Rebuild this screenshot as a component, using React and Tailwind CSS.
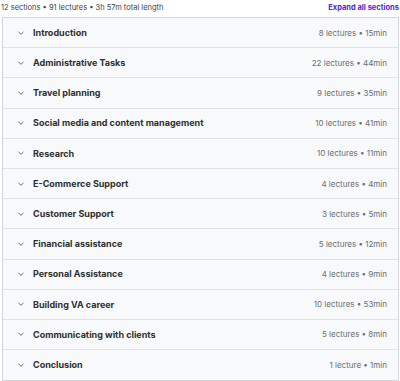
import React from 'react';

const sections = [
  ['Introduction', '8 lectures • 15min'],
  ['Administrative Tasks', '22 lectures • 44min'],
  ['Travel planning', '9 lectures • 35min'],
  ['Social media and content management', '10 lectures • 41min'],
  ['Research', '10 lectures • 11min'],
  ['E-Commerce Support', '4 lectures • 4min'],
  ['Customer Support', '3 lectures • 5min'],
  ['Financial assistance', '5 lectures • 12min'],
  ['Personal Assistance', '4 lectures • 9min'],
  ['Building VA career', '10 lectures • 53min'],
  ['Communicating with clients', '5 lectures • 8min'],
  ['Conclusion', '1 lecture • 1min'],
];

const Chevron = () => (
  <svg width="8" height="8" viewBox="0 0 8 8" fill="none" className="text-[#6a6f73]">
    <path d="M1.8 3.2l2.2 2.1 2.2-2.1" stroke="currentColor" strokeWidth="1" strokeLinecap="round" strokeLinejoin="round" />
  </svg>
);

export default function App() {
  return (
    <div className="w-[400px] h-[381px] bg-white text-[#2d2f31]" style={{ fontFamily: 'Inter, "Noto Sans", sans-serif' }}>
      {/* Summary bar */}
      <div className="flex justify-between items-center h-[16px] pl-[1px] pr-[1px]">
        <span className="text-[7.5px] text-[#3e4143]">12 sections • 91 lectures • 3h 57m total length</span>
        <span className="text-[7.5px] font-bold text-[#5624d0]">Expand all sections</span>
      </div>

      {/* Sections */}
      <div className="mt-[1px] ml-[2px] mr-[1px] border border-[#d1d7dc]">
        {sections.map(([title, info], i) => (
          <div
            key={title}
            className={`flex items-center h-[30.2px] bg-[#f7f9fa] pl-[14px] pr-[11px] ${i < sections.length - 1 ? 'border-b border-[#dfe3e6]' : ''}`}
          >
            <Chevron />
            <span className="ml-[8px] text-[9px] font-bold flex-1 truncate text-[#2d2f31]">{title}</span>
            <span className="text-[8px] text-[#6a6f73]">{info}</span>
          </div>
        ))}
      </div>
    </div>
  );
}
